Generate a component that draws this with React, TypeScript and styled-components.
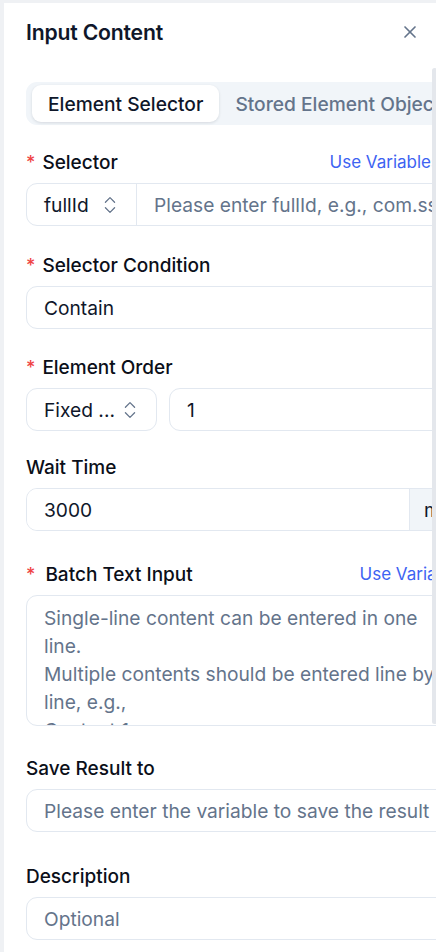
import React from "react";
import styled, { createGlobalStyle } from "styled-components";
import { X, ChevronsUpDown } from "lucide-react";

const GlobalStyle = createGlobalStyle`
  html, body {
    margin: 0;
    padding: 0;
    background: #eff1f4;
    overflow: hidden;
    font-family: Inter, "Noto Sans", sans-serif;
    color: #0f172a;
  }
  * {
    box-sizing: border-box;
  }
`;

const Panel = styled.div`
  position: relative;
  margin: 3px 0 0 4px;
  width: 560px;
  height: 949px;
  background: #ffffff;
  padding: 14px 0 0 22px;
`;

const Header = styled.div`
  display: flex;
  align-items: center;
  justify-content: space-between;
  width: 400px;
  height: 30px;
`;

const Title = styled.h2`
  margin: 0;
  font-size: 21.2px;
  font-weight: 600;
  letter-spacing: -0.2px;
`;

const CloseButton = styled.button`
  display: flex;
  align-items: center;
  justify-content: center;
  width: 32px;
  height: 32px;
  padding: 0;
  border: none;
  background: transparent;
  color: #64748b;
  cursor: pointer;
`;

const Tabs = styled.div`
  display: flex;
  align-items: center;
  width: 470px;
  height: 43px;
  margin-top: 35px;
  padding: 3px 6px;
  background: #f1f5f9;
  border-radius: 11px;
`;

const Tab = styled.div<{ $active?: boolean }>`
  display: flex;
  align-items: center;
  height: 37px;
  padding: 0 16px;
  border-radius: 9px;
  font-size: 19.2px;
  font-weight: 500;
  white-space: nowrap;
  color: ${(p) => (p.$active ? "#0f172a" : "#64748b")};
  background: ${(p) => (p.$active ? "#ffffff" : "transparent")};
  box-shadow: ${(p) =>
    p.$active ? "0 1px 3px rgba(15, 23, 42, 0.12)" : "none"};
`;

const Form = styled.div`
  display: flex;
  flex-direction: column;
  margin-top: 25px;
  width: 444px;
`;

const Field = styled.div<{ $gap?: number }>`
  display: flex;
  flex-direction: column;
  margin-top: ${(p) => p.$gap ?? 0}px;
`;

const LabelRow = styled.div<{ $width?: number }>`
  display: flex;
  align-items: center;
  justify-content: space-between;
  height: 24px;
  margin-bottom: 9px;
  width: ${(p) => (p.$width ? `${p.$width}px` : "100%")};
`;

const Label = styled.label`
  display: flex;
  align-items: center;
  font-size: 19px;
  font-weight: 500;
  color: #0b0f19;
  white-space: nowrap;
`;

const Required = styled.span<{ $gap?: number }>`
  color: #ef4444;
  margin-right: ${(p) => p.$gap ?? 7}px;
  font-size: 18px;
`;

const LinkText = styled.a`
  font-size: 17px;
  color: #3d63f2;
  white-space: nowrap;
  cursor: pointer;
`;

const Group = styled.div<{ $gap?: number }>`
  display: flex;
  gap: ${(p) => p.$gap ?? 0}px;
  height: 43px;
`;

const Joined = styled.div`
  display: flex;
  height: 43px;
  border: 1px solid #e2e8f0;
  border-radius: 11px;
  overflow: hidden;
`;

const Select = styled.div<{ $width: number; $bordered?: boolean }>`
  display: flex;
  align-items: center;
  justify-content: space-between;
  flex: none;
  width: ${(p) => p.$width}px;
  height: ${(p) => (p.$bordered ? "43px" : "100%")};
  padding: 0 15px 0 17px;
  font-size: 19.2px;
  color: #0f172a;
  white-space: nowrap;
  border: ${(p) => (p.$bordered ? "1px solid #e2e8f0" : "none")};
  border-right: 1px solid #e2e8f0;
  border-radius: ${(p) => (p.$bordered ? "11px" : "0")};
  svg {
    color: #64748b;
    flex: none;
  }
`;

const Input = styled.input<{ $joined?: boolean }>`
  display: block;
  min-width: 0;
  width: 100%;
  height: ${(p) => (p.$joined ? "100%" : "43px")};
  padding: 0 17px;
  font-family: inherit;
  font-size: 19.2px;
  color: #0f172a;
  background: #ffffff;
  border: ${(p) => (p.$joined ? "none" : "1px solid #e2e8f0")};
  border-radius: ${(p) => (p.$joined ? "0" : "11px")};
  outline: none;
  &::placeholder {
    color: #64748b;
  }
`;

const Addon = styled.div`
  display: flex;
  align-items: center;
  flex: none;
  width: 60px;
  padding-left: 14px;
  background: #f1f5f9;
  border-left: 1px solid #e2e8f0;
  font-size: 19.2px;
  color: #0f172a;
`;

const TextArea = styled.textarea`
  display: block;
  width: 100%;
  height: 131px;
  padding: 8px 17px;
  font-family: inherit;
  font-size: 19.2px;
  line-height: 28px;
  color: #0f172a;
  border: 1px solid #e2e8f0;
  border-radius: 11px;
  resize: none;
  overflow: hidden;
  outline: none;
  &::placeholder {
    color: #64748b;
  }
`;

const ScrollThumb = styled.div`
  position: absolute;
  top: 65px;
  left: 428px;
  width: 5px;
  height: 656px;
  border-radius: 3px;
  background: #e4e7ec;
`;

const batchPlaceholder =
  "Single-line content can be entered in one line.\nMultiple contents should be entered line by line, e.g.,\nContent 1\nContent 2";

export default function App() {
  return (
    <>
      <GlobalStyle />
      <Panel>
        <Header>
          <Title>Input Content</Title>
          <CloseButton aria-label="Close">
            <X size={20} strokeWidth={2} />
          </CloseButton>
        </Header>

        <Tabs>
          <Tab $active>Element Selector</Tab>
          <Tab>Stored Element Object</Tab>
        </Tabs>

        <Form>
          <Field>
            <LabelRow $width={414}>
              <Label>
                <Required>*</Required>Selector
              </Label>
              <LinkText>Use Variables</LinkText>
            </LabelRow>
            <Joined>
              <Select $width={110}>
                fullId
                <ChevronsUpDown size={22} strokeWidth={1.4} />
              </Select>
              <Input $joined placeholder="Please enter fullId, e.g., com.ss.android" />
            </Joined>
          </Field>

          <Field $gap={27}>
            <LabelRow>
              <Label>
                <Required>*</Required>Selector Condition
              </Label>
            </LabelRow>
            <Input defaultValue="Contain" readOnly />
          </Field>

          <Field $gap={26}>
            <LabelRow>
              <Label>
                <Required>*</Required>Element Order
              </Label>
            </LabelRow>
            <Group $gap={12}>
              <Select $width={131} $bordered>
                Fixed ...
                <ChevronsUpDown size={22} strokeWidth={1.4} />
              </Select>
              <Input defaultValue="1" readOnly />
            </Group>
          </Field>

          <Field $gap={24}>
            <LabelRow>
              <Label>Wait Time</Label>
            </LabelRow>
            <Joined>
              <Input $joined defaultValue="3000" readOnly />
              <Addon>ms</Addon>
            </Joined>
          </Field>

          <Field $gap={31}>
            <LabelRow>
              <Label>
                <Required $gap={10}>*</Required>Batch Text Input
              </Label>
              <LinkText>Use Variables</LinkText>
            </LabelRow>
            <TextArea placeholder={batchPlaceholder} />
          </Field>

          <Field $gap={30}>
            <LabelRow>
              <Label>Save Result to</Label>
            </LabelRow>
            <Input placeholder="Please enter the variable to save the result" />
          </Field>

          <Field $gap={32}>
            <LabelRow>
              <Label>Description</Label>
            </LabelRow>
            <Input placeholder="Optional" />
          </Field>
        </Form>

        <ScrollThumb />
      </Panel>
    </>
  );
}
